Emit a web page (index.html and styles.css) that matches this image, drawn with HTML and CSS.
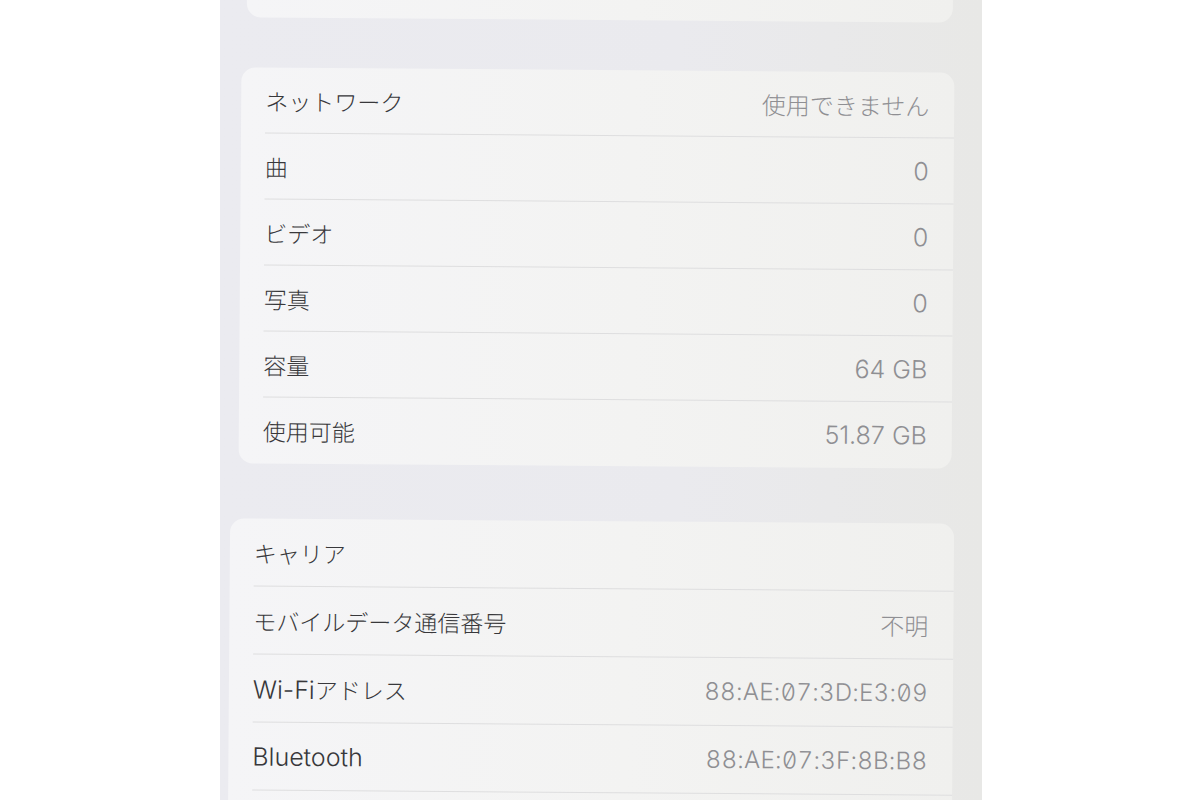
FILE: index.html
```html
<!DOCTYPE html>
<html lang="ja">
<head>
    <meta charset="UTF-8">
    <meta name="viewport" content="width=device-width, initial-scale=1.0">
    <title>情報</title>
    <link rel="stylesheet" href="styles.css">
</head>
<body>

    <!-- iPad 画面 -->
    <div class="screen">

        <!-- 上のグループ (下端だけ見える) -->
        <div class="group group-top"></div>

        <!-- メディア / 容量 -->
        <ul class="group group-media">
            <li class="row"><span class="label">ネットワーク</span><span class="value">使用できません</span></li>
            <li class="row"><span class="label">曲</span><span class="value latin">0</span></li>
            <li class="row"><span class="label">ビデオ</span><span class="value latin">0</span></li>
            <li class="row"><span class="label">写真</span><span class="value latin">0</span></li>
            <li class="row"><span class="label">容量</span><span class="value latin">64 GB</span></li>
            <li class="row"><span class="label">使用可能</span><span class="value latin">51.87 GB</span></li>
        </ul>

        <!-- キャリア / アドレス -->
        <ul class="group group-net">
            <li class="row"><span class="label">キャリア</span></li>
            <li class="row"><span class="label">モバイルデータ通信番号</span><span class="value">不明</span></li>
            <li class="row"><span class="label"><span class="latin">Wi-Fi</span>アドレス</span><span class="value mac">88:AE:07:3D:E3:09</span></li>
            <li class="row"><span class="label latin">Bluetooth</span><span class="value mac">88:AE:07:3F:8B:B8</span></li>
        </ul>

    </div>

</body>
</html>
```

FILE: styles.css
```css
html,body{
    margin: 0;
    padding: 0;
}
body{
    height: 800px;
    overflow: hidden;
    background-color: #fff;
    font-family: Inter, "Noto Sans CJK JP", sans-serif;
}

/* 画面部分 (写真の左右は白) */
.screen{
    width: 762px;
    height: 800px;
    margin-left: 220px;
    overflow: hidden;
    background-image: linear-gradient(to right, #ebebf0, #eaeaee 60%, #e8e8e6);
}

/* 設定のグループ (角丸カード) */
.group{
    margin: 0 29px 0 27px;
    padding: 0;
    list-style: none;
    border-radius: 14px;
    background-image: linear-gradient(to right, #f5f5f7, #f3f3f2 55%, #f0f0ee);
    transform: rotate(.42deg);
}
.group-top{
    height: 60px;
    margin-top: -40px;
    margin-left: 27px;
}
.group-media{
    margin-top: 50px;
    margin-left: 20px;
}
.group-net{
    margin-top: 55px;
    margin-left: 9px;
    padding-bottom: 40px;
}

/* 1行 */
.row{
    display: flex;
    align-items: center;
    justify-content: space-between;
    height: 66px;
    margin-left: 24px;
    padding-right: 25px;
    border-bottom: 1px solid #dededf;
    box-sizing: border-box;
    font-size: 23px;
    font-weight: 300;
}
.group-media .row:last-child{
    border-bottom: none;
}
.group-net .row{
    height: 68px;
}
.label{
    color: #38383b;
    white-space: nowrap;
}
.value{
    color: #8f8f93;
    white-space: nowrap;
    font-size: 24px;
}
/* 英数字は少し大きめ */
.latin{
    font-size: 25px;
}
/* MACアドレス: 斜線付きゼロ */
.mac{
    font-feature-settings: "zero", "tnum";
    letter-spacing: .3px;
    font-size: 24px;
}
```
